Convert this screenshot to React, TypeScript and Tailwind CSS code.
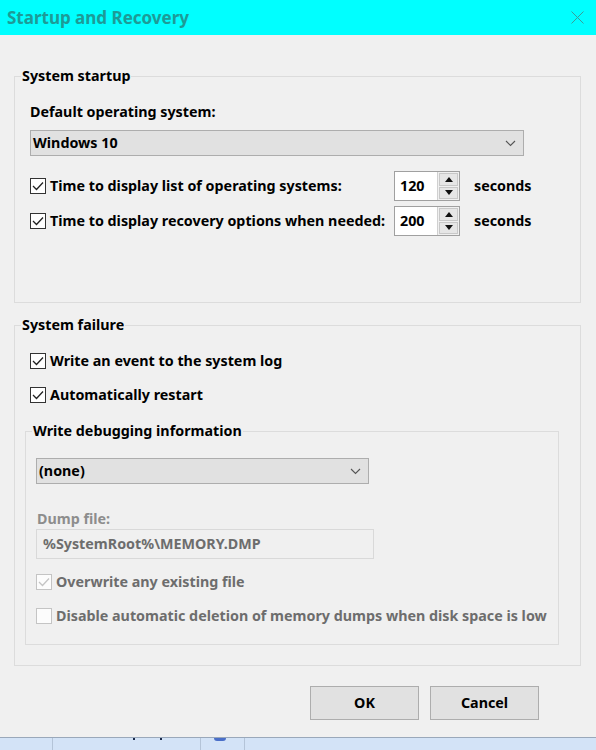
import React from "react";

const font = { fontFamily: '"Noto Sans", "Open Sans", Arial, sans-serif' };

const CheckBox = ({ checked, disabled }: { checked?: boolean; disabled?: boolean }) => (
  <span
    className={`w-[16px] h-[16px] shrink-0 border flex items-center justify-center ${
      disabled ? "border-[#c4c4c4] bg-[#fcfcfc]" : "border-[#333333] bg-white"
    }`}
  >
    {checked && (
      <svg width="12" height="10" viewBox="0 0 12 10">
        <path d="M1 5 L4.5 8.5 L11 1.5" fill="none" stroke={disabled ? "#c4c4c4" : "#222"} strokeWidth="1.3" />
      </svg>
    )}
  </span>
);

const Chevron = () => (
  <svg width="11" height="7" viewBox="0 0 11 7">
    <path d="M1 1 L5.5 5.5 L10 1" fill="none" stroke="#555" strokeWidth="1.1" />
  </svg>
);

const Spin = ({ value }: { value: string }) => (
  <div className="flex h-[30px] w-[66px] border border-[#a0a0a0] bg-white">
    <div className="flex-1 flex items-center pl-[5px] text-black">{value}</div>
    <div className="w-[22px] flex flex-col gap-[1px] p-[1px] bg-[#f0f0f0] border-l border-[#d0d0d0]">
      <div className="flex-1 bg-[#e6e6e6] border border-[#c8c8c8] flex items-center justify-center">
        <svg width="8" height="5" viewBox="0 0 8 5"><path d="M0 5 L4 0 L8 5 Z" fill="#111" /></svg>
      </div>
      <div className="flex-1 bg-[#e6e6e6] border border-[#c8c8c8] flex items-center justify-center">
        <svg width="8" height="5" viewBox="0 0 8 5"><path d="M0 0 L4 5 L8 0 Z" fill="#111" /></svg>
      </div>
    </div>
  </div>
);

const TimeRow = ({ label, value }: { label: string; value: string }) => (
  <div className="flex items-center">
    <div className="w-[364px] flex items-center gap-[4px]">
      <CheckBox checked />
      <span>{label}</span>
    </div>
    <Spin value={value} />
    <span className="ml-[14px]">seconds</span>
  </div>
);

export default function App() {
  return (
    <div className="w-[596px] h-[750px] bg-[#f0f0f0] flex flex-col text-[14.3px] font-bold text-black overflow-hidden" style={font}>
      {/* title bar */}
      <div className="h-[35px] shrink-0 bg-[#00ffff] flex items-center justify-between pl-[7px] pr-[12px]">
        <span className="text-[17px] font-bold text-[#1d9b97]">Startup and Recovery</span>
        <svg width="13" height="13" viewBox="0 0 13 13">
          <path d="M0.5 0.5 L12.5 12.5 M12.5 0.5 L0.5 12.5" stroke="#3a9c99" strokeWidth="1" />
        </svg>
      </div>

      <div className="flex flex-col pl-[14px] pr-[15px] pt-[31px]">
        {/* System startup */}
        <fieldset className="border border-[#dcdcdc] p-0 m-0">
          <legend className="ml-[6px] px-[1px] leading-[20px]">System startup</legend>
          <div className="px-[15px] pt-[16px] pb-[66px] flex flex-col">
            <div className="leading-[20px]">Default operating system:</div>
            <div className="mt-[8px] h-[26px] w-[494px] bg-[#e1e1e1] border border-[#adadad] flex items-center justify-between pl-[2px] pr-[7px]">
              <span>Windows 10</span>
              <Chevron />
            </div>
            <div className="mt-[15px] flex flex-col gap-[5px]">
              <TimeRow label="Time to display list of operating systems:" value="120" />
              <TimeRow label="Time to display recovery options when needed:" value="200" />
            </div>
          </div>
        </fieldset>

        {/* System failure */}
        <fieldset className="mt-[12px] border border-[#dcdcdc] p-0 m-0">
          <legend className="ml-[6px] px-[1px] leading-[20px]">System failure</legend>
          <div className="pl-[10px] pr-[21px] pt-[16px] pb-[20px] flex flex-col">
            <div className="pl-[5px] flex items-center gap-[4px] leading-[20px]">
              <CheckBox checked />
              <span>Write an event to the system log</span>
            </div>
            <div className="mt-[14px] pl-[5px] flex items-center gap-[4px] leading-[20px]">
              <CheckBox checked />
              <span>Automatically restart</span>
            </div>

            <fieldset className="mt-[16px] border border-[#dcdcdc] p-0 m-0">
              <legend className="ml-[6px] px-[1px] leading-[20px]">Write debugging information</legend>
              <div className="px-[10px] pt-[17px] pb-[18px] flex flex-col">
                <div className="h-[26px] w-[333px] bg-[#e1e1e1] border border-[#adadad] flex items-center justify-between pl-[2px] pr-[7px]">
                  <span>(none)</span>
                  <Chevron />
                </div>
                <div className="mt-[26px] leading-[18px] pl-[1px] text-[#8d8d8d]">Dump file:</div>
                <div className="mt-[1px] h-[30px] w-[338px] border border-[#d9d9d9] bg-[#f0f0f0] flex items-center pl-[6px] text-[#6d6d6d]">
                  %SystemRoot%\MEMORY.DMP
                </div>
                <div className="mt-[13px] flex items-center gap-[4px] leading-[20px] text-[#6d6d6d]">
                  <CheckBox checked disabled />
                  <span>Overwrite any existing file</span>
                </div>
                <div className="mt-[14px] flex items-center gap-[4px] leading-[20px] text-[#6d6d6d]">
                  <CheckBox disabled />
                  <span>Disable automatic deletion of memory dumps when disk space is low</span>
                </div>
              </div>
            </fieldset>
          </div>
        </fieldset>

        {/* buttons */}
        <div className="mt-[20px] flex justify-end gap-[11px] pr-[42px]">
          <button className="w-[109px] h-[34px] bg-[#e1e1e1] border border-[#adadad] font-bold">OK</button>
          <button className="w-[109px] h-[34px] bg-[#e1e1e1] border border-[#adadad] font-bold">Cancel</button>
        </div>
      </div>

      {/* taskbar strip behind the dialog */}
      <div className="mt-auto h-[13px] shrink-0 border-t border-[#9aa8ba] bg-[#d3e3f7] flex">
        <div className="w-[53px] border-r border-[#b4c4d8]" />
        <div className="w-[148px] border-r border-[#b4c4d8] relative">
          <span className="absolute left-[80px] top-[0px] w-[2px] h-[2px] bg-[#1a2a4a]" />
          <span className="absolute left-[107px] top-[0px] w-[2px] h-[2px] bg-[#1a2a4a]" />
        </div>
        <div className="w-[44px] border-r border-[#b4c4d8] relative">
          <span className="absolute left-[13px] top-[0px] w-[12px] h-[3px] rounded-b-full bg-[#4a6fc8]" />
        </div>
        <div className="flex-1" />
      </div>
    </div>
  );
}
